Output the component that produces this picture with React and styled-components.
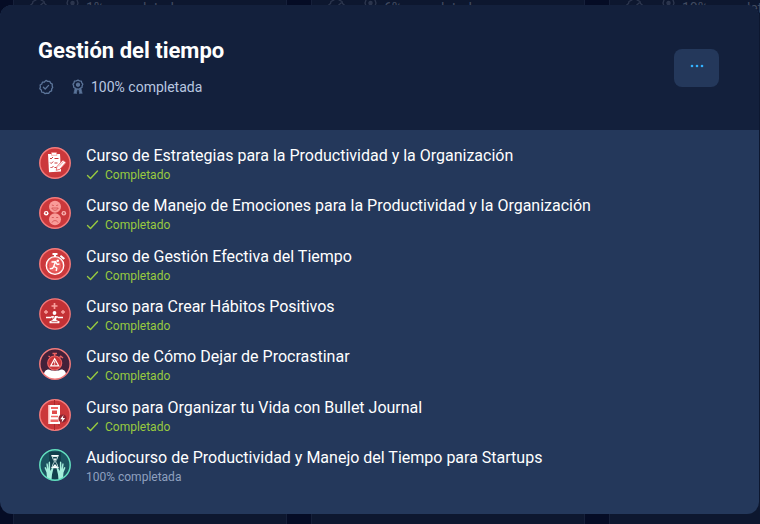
import styled, { createGlobalStyle, css } from 'styled-components';

const GlobalStyle = createGlobalStyle`
  * {
    box-sizing: border-box;
  }

  body {
    margin: 0;
    background: #050c25;
    font-family: Roboto, 'Liberation Sans', sans-serif;
  }
`;

const Page = styled.div`
  position: relative;
  min-height: 100vh;
  overflow: hidden;
  display: flex;
  flex-direction: column;
  padding: 5px 1px 10px 0;
`;

const Backdrop = styled.div`
  position: absolute;
  inset: 0;
  display: grid;
  grid-template-columns: repeat(3, 274px);
  gap: 24px;
  padding-left: 13px;
`;

const BackCard = styled.div`
  display: flex;
  align-items: flex-start;
  gap: 7px;
  padding: 0 16px;
  background: #0d172f;
  border: 1px solid #16203a;
  border-width: 0 1px;
  color: #414b61;
  font-size: 14px;
  line-height: 16px;

  svg {
    color: #2c364e;
  }
`;

const Dialog = styled.main`
  position: relative;
  flex: 1;
  display: flex;
  flex-direction: column;
  border-radius: 12px;
  overflow: hidden;
  background: #24385b;
`;

const Header = styled.header`
  display: flex;
  align-items: center;
  justify-content: space-between;
  padding: 33px 40px 33px 38px;
  background: #13203c;
`;

const Title = styled.h1`
  margin: 0 0 12px;
  font-size: 22px;
  font-weight: 700;
  line-height: 26px;
  color: #fff;
`;

const Stats = styled.div`
  display: flex;
  align-items: center;
  gap: 17px;
  height: 21px;
  color: #5b7499;
`;

const Stat = styled.span`
  display: flex;
  align-items: center;
  gap: 6px;
`;

const StatText = styled.span`
  font-size: 14px;
  line-height: 20px;
  color: #b9c7e0;
`;

const MoreButton = styled.button`
  display: flex;
  justify-content: center;
  width: 45px;
  height: 38px;
  padding: 15px 0;
  border: none;
  border-radius: 8px;
  background: #24385b;
  color: #33b1ff;
  cursor: pointer;
`;

const CourseList = styled.ul`
  flex: 1;
  display: flex;
  flex-direction: column;
  justify-content: space-between;
  margin: 0;
  padding: 16px 39px 28px;
  list-style: none;
`;

const CourseLink = styled.a`
  display: flex;
  align-items: flex-start;
  gap: 15px;
  text-decoration: none;
`;

const CourseName = styled.span`
  display: block;
  font-size: 16px;
  font-weight: 400;
  line-height: 20px;
  color: #fff;
`;

const CourseStatus = styled.span`
  display: flex;
  align-items: center;
  gap: 6px;
  font-size: 12px;
  line-height: 18px;
  color: #8fa0bf;

  ${props => props.$done && css`
    color: #98ca3f;
  `}
`;

const Badge = styled.svg`
  flex: none;
  width: 32px;
  height: 32px;
  margin-top: 1px;
`;

const Icon = styled.svg`
  flex: none;
  fill: none;
  stroke: currentColor;
  stroke-linecap: round;
  stroke-linejoin: round;
`;

const VerifiedIcon = () => (
  <Icon width="16" height="16" viewBox="0 0 16 16" strokeWidth="1.3">
    <path d="M8 1.4l1.7 1 2-.1 .9 1.8 1.7 1-.1 2 .5 1.3-1 1.5-.1 2-1.8.8-1.1 1.6-2-.2-1.6.6-1.5-1.3-1.9-.3-.4-2-1.5-1.3.6-1.8-.3-2 1.7-1 .6-1.9 2-.1z" />
    <path d="M5.4 8.2l1.8 1.8 3.4-3.6" />
  </Icon>
);

const MedalIcon = () => (
  <Icon width="14" height="16" viewBox="0 0 14 16" strokeWidth="1.3">
    <path d="M7 1.2l1.6.7 1.7.2.5 1.7 1 1.4-.7 1.6-.1 1.7-1.6.7L8 10.3 7 10l-1.4.3-1.3-1.1-1.5-.7-.2-1.7-.6-1.6 1-1.4.4-1.7 1.8-.2z" />
    <circle cx="7" cy="5.7" r="1.5" fill="currentColor" />
    <path d="M4 9.5L2.800 14.500l1.500-.5.9 1 .9-4zM10 9.500l1.200 5-1.500-.5-.9 1-.9-4z" fill="currentColor" strokeWidth="0.6" />
  </Icon>
);

// scrolled-off stats of the cards behind the dialog
const ClippedStatIcons = () => (
  <Icon width="49" height="10" viewBox="0 0 49 10" strokeWidth="1.3">
    <path d="M6 0L3 1.500 2.500 3.500 .7 5l1 3M11 0l3 1.500.5 2L16.300 5l-1 3M6 5.500L8 7.500 13 3" />
    <path d="M38 0l-1 3 1 3 4 2M47 0l1 3-1 3-4 2" />
    <circle cx="42.500" cy="3" r="1.600" fill="currentColor" />
  </Icon>
);

const CheckIcon = () => (
  <Icon width="13" height="12" viewBox="0 0 13 12" strokeWidth="1.4">
    <path d="M1.500 6.500l3 3 7-7.500" />
  </Icon>
);

const RedDisc = () => (
  <circle cx="16" cy="16" r="15.200" fill="#cb383b" stroke="#f47b7b" strokeWidth="1.500" />
);

const ChecklistBadge = () => (
  <Badge viewBox="0 0 32 32">
    <RedDisc />
    <path d="M9 7h12l1 17.500-12 .8z" fill="#fff" />
    <path d="M12.500 5.500h5l.5 2.800h-5.500z" fill="#fff" stroke="#f47b7b" strokeWidth=".6" />
    <g fill="none" stroke="#cb383b" strokeWidth="1">
      <path d="M11 11l1 1 2-2M11.200 15.500l1 1 2-2M11.500 20l1 1 2-2" />
      <path d="M15.500 11.500h4M15.500 16h3M15.500 20.500h2" />
    </g>
    <path d="M24 13l3 2.500-6.200 6.800-3.600 1 .8-3.800z" fill="#fff" stroke="#e04b4c" strokeWidth=".8" />
    <path d="M20 19.500l4.500-5M22 21l4-4.500" stroke="#f47b7b" strokeWidth=".7" />
  </Badge>
);

const EmotionsBadge = () => (
  <Badge viewBox="0 0 32 32">
    <RedDisc />
    <circle cx="16" cy="9.800" r="6" fill="#f99c99" />
    <circle cx="16" cy="22.200" r="6" fill="#f99c99" />
    <g fill="none" stroke="#d65556" strokeWidth=".9">
      <path d="M12.800 8l2 .6M19.200 8l-2 .6M12.800 11c1 3 5.400 3 6.400 0z" />
      <path d="M12.800 20.500h2M17.200 20.500h2M13 25.500c1-2.500 5-2.500 6 0" />
    </g>
    <circle cx="7.200" cy="16.200" r="2.300" fill="#fff" />
    <circle cx="7.200" cy="16" r=".9" fill="#c83a3d" />
    <circle cx="24.800" cy="16.200" r="2.300" fill="#f9b5b3" />
    <path d="M24.800 15v2.400M23.800 16.200h2" stroke="#c83a3d" strokeWidth=".8" />
  </Badge>
);

const StopwatchBadge = () => (
  <Badge viewBox="0 0 32 32">
    <RedDisc />
    <path d="M13.500 5h5v2h-5zM15 7h2v2h-2z" fill="#fff" />
    <path d="M22 7l4 3.200-1.500 1.600-3.700-3.200z" fill="#fff" />
    <circle cx="16" cy="17.500" r="8.800" fill="#ef6766" stroke="#fff" strokeWidth="1.200" />
    <circle cx="16" cy="17.500" r="6.700" fill="none" stroke="#d64244" strokeWidth=".9" />
    <circle cx="18.800" cy="12.700" r="1.300" fill="#fff" />
    <path d="M12.500 14l4-.2-1.700 4.500 3 1.700-.6 3M14.800 18.300l-1.300 2-2.800.6M16.500 14l1.700 2.500 2.300-.5" fill="none" stroke="#fff" strokeWidth="1.400" />
  </Badge>
);

const HabitsBadge = () => (
  <Badge viewBox="0 0 32 32">
    <circle cx="16" cy="16" r="15.200" fill="#c33135" stroke="#f47b7b" strokeWidth="1.300" />
    <path d="M15.500 5v6M12.500 8h6" stroke="#f9a09d" strokeWidth="1.700" />
    <path d="M7 12v4M5 14h4M24 12v4M22 14h4" stroke="#f9a09d" strokeWidth="1.400" />
    <circle cx="15.500" cy="15" r="1.900" fill="#fff" />
    <path d="M7 19.500h5M19 19.500h5M12 19h7" stroke="#fff" strokeWidth="1.400" />
    <path d="M13.300 18h4.400l-.5 4 3.500 1.500-.5 1.700h-9.500l-.4-1.700 3.500-1.500z" fill="#fff" />
    <path d="M15.500 18l-1 3M12.500 23.700h6" stroke="#c33135" strokeWidth=".8" />
  </Badge>
);

const ProcrastinationBadge = () => (
  <Badge viewBox="0 0 32 32">
    <circle cx="16" cy="16" r="15.200" fill="#43213a" />
    <path d="M5 26.500c0-3 2-5.200 5-5 2 1.600 10 1.600 12 0 3-.2 5 2 5 5-6 6-16 6-22 0z" fill="#fff" />
    <circle cx="16" cy="16" r="15.200" fill="none" stroke="#f47b7b" strokeWidth="1.500" />
    <path d="M13.500 5.500h4.500M15.700 5v3M21.500 8l2.500 2M20.500 9.500l1.800-1.800M11 9L9.500 8" stroke="#ee6262" strokeWidth="1.500" />
    <circle cx="15.700" cy="15" r="7" fill="#c9373a" stroke="#ee6262" strokeWidth="1.200" />
    <path d="M15.700 10.800l4 7h-8z" fill="none" stroke="#fff" strokeWidth="1.200" />
    <path d="M15.700 13.200v2.400M15.700 16.300v.8" stroke="#fff" strokeWidth="1" />
  </Badge>
);

const JournalBadge = () => (
  <Badge viewBox="0 0 32 32">
    <RedDisc />
    <path d="M15.500 1v30M20 4v23" stroke="#a9292d" strokeWidth="1" />
    <path d="M9 6h12v19H9z" fill="#fff" />
    <path d="M9 6h1.500v19H9z" fill="#f9b5b3" />
    <path d="M12 8h7v2h-7zM11.500 20.500h8v2.500h-8z" fill="#ef6766" />
    <path d="M13 11.500h5v3.500h-5z" fill="#e04b4c" />
    <path d="M12 17.500h7" stroke="#ef6766" strokeWidth="1.500" />
    <circle cx="23.500" cy="19.500" r="4" fill="#8f2530" />
    <path d="M24.500 16l-3.300 4.200h2.200l-.8 3.300 3.500-4.500h-2.200z" fill="#fff" />
  </Badge>
);

const HourglassBadge = () => (
  <Badge viewBox="0 0 32 32">
    <circle cx="16" cy="16" r="15.200" fill="#1b5360" />
    <path d="M10 3h12v18l-3 9h-6l-3-9z" fill="#123f4c" />
    <path d="M12.300 6.800h7.400M12.300 18.500h7.400" stroke="#fff" strokeWidth="1.500" />
    <path d="M13.500 7.500c0 3 1.800 3.500 1.800 5s-1.800 2-1.800 5h5c0-3-1.800-3.500-1.800-5s1.800-2 1.800-5z" fill="#123f4c" stroke="#e6fff8" strokeWidth=".9" />
    <path d="M14.500 9.500h3L16 12zM14 17.500l2-2.500 2 2.500z" fill="#fff" />
    <g fill="#a5efdc">
      <path d="M8 29l-.5-5.500-1.700-4c-.5-1.500.7-2 1.300-.8L8 20.500l-.6-5.200c-.1-1.300 1.200-1.400 1.400-.1l.7 4.800.2-6.500c.1-1.300 1.400-1.300 1.400 0l.1 8.500 1.600-2.800c.7-1 1.800-.4 1.500.8L13 25.500l-.5 5.200z" />
      <path d="M24 29l.5-5.500 1.700-4c.5-1.500-.7-2-1.300-.8L24 20.500l.6-5.200c.1-1.300-1.200-1.400-1.400-.1l-.7 4.800-.2-6.500c-.1-1.300-1.400-1.300-1.400 0l-.1 8.500-1.600-2.800c-.7-1-1.800-.4-1.500.8L19 25.500l.5 5.200z" />
    </g>
    <circle cx="16" cy="16" r="15.200" fill="none" stroke="#62dfbe" strokeWidth="1.500" />
  </Badge>
);

const courses = [
  { name: 'Curso de Estrategias para la Productividad y la Organización', badge: ChecklistBadge, done: true },
  { name: 'Curso de Manejo de Emociones para la Productividad y la Organización', badge: EmotionsBadge, done: true },
  { name: 'Curso de Gestión Efectiva del Tiempo', badge: StopwatchBadge, done: true },
  { name: 'Curso para Crear Hábitos Positivos', badge: HabitsBadge, done: true },
  { name: 'Curso de Cómo Dejar de Procrastinar', badge: ProcrastinationBadge, done: true },
  { name: 'Curso para Organizar tu Vida con Bullet Journal', badge: JournalBadge, done: true },
  { name: 'Audiocurso de Productividad y Manejo del Tiempo para Startups', badge: HourglassBadge, done: false }
];

const App = () => (
  <>
    <GlobalStyle />
    <Page>
      <Backdrop aria-hidden="true">
        {['1% completada', '6% completada', '10% completada'].map(text => (
          <BackCard key={text}>
            <ClippedStatIcons />
            {text}
          </BackCard>
        ))}
      </Backdrop>
      <Dialog>
        <Header>
          <div>
            <Title>Gestión del tiempo</Title>
            <Stats>
              <VerifiedIcon />
              <Stat>
                <MedalIcon />
                <StatText>100% completada</StatText>
              </Stat>
            </Stats>
          </div>
          <MoreButton type="button" aria-label="Más opciones">
            <svg width="14" height="4" viewBox="0 0 14 4" fill="currentColor">
              <circle cx="2" cy="2" r="1.300" />
              <circle cx="7" cy="2" r="1.300" />
              <circle cx="12" cy="2" r="1.300" />
            </svg>
          </MoreButton>
        </Header>
        <CourseList>
          {courses.map(({ name, badge: CourseBadge, done }) => (
            <li key={name}>
              <CourseLink href="#">
                <CourseBadge />
                <div>
                  <CourseName>{name}</CourseName>
                  <CourseStatus $done={done}>
                    {done && <CheckIcon />}
                    {done ? 'Completado' : '100% completada'}
                  </CourseStatus>
                </div>
              </CourseLink>
            </li>
          ))}
        </CourseList>
      </Dialog>
    </Page>
  </>
);

export default App;
